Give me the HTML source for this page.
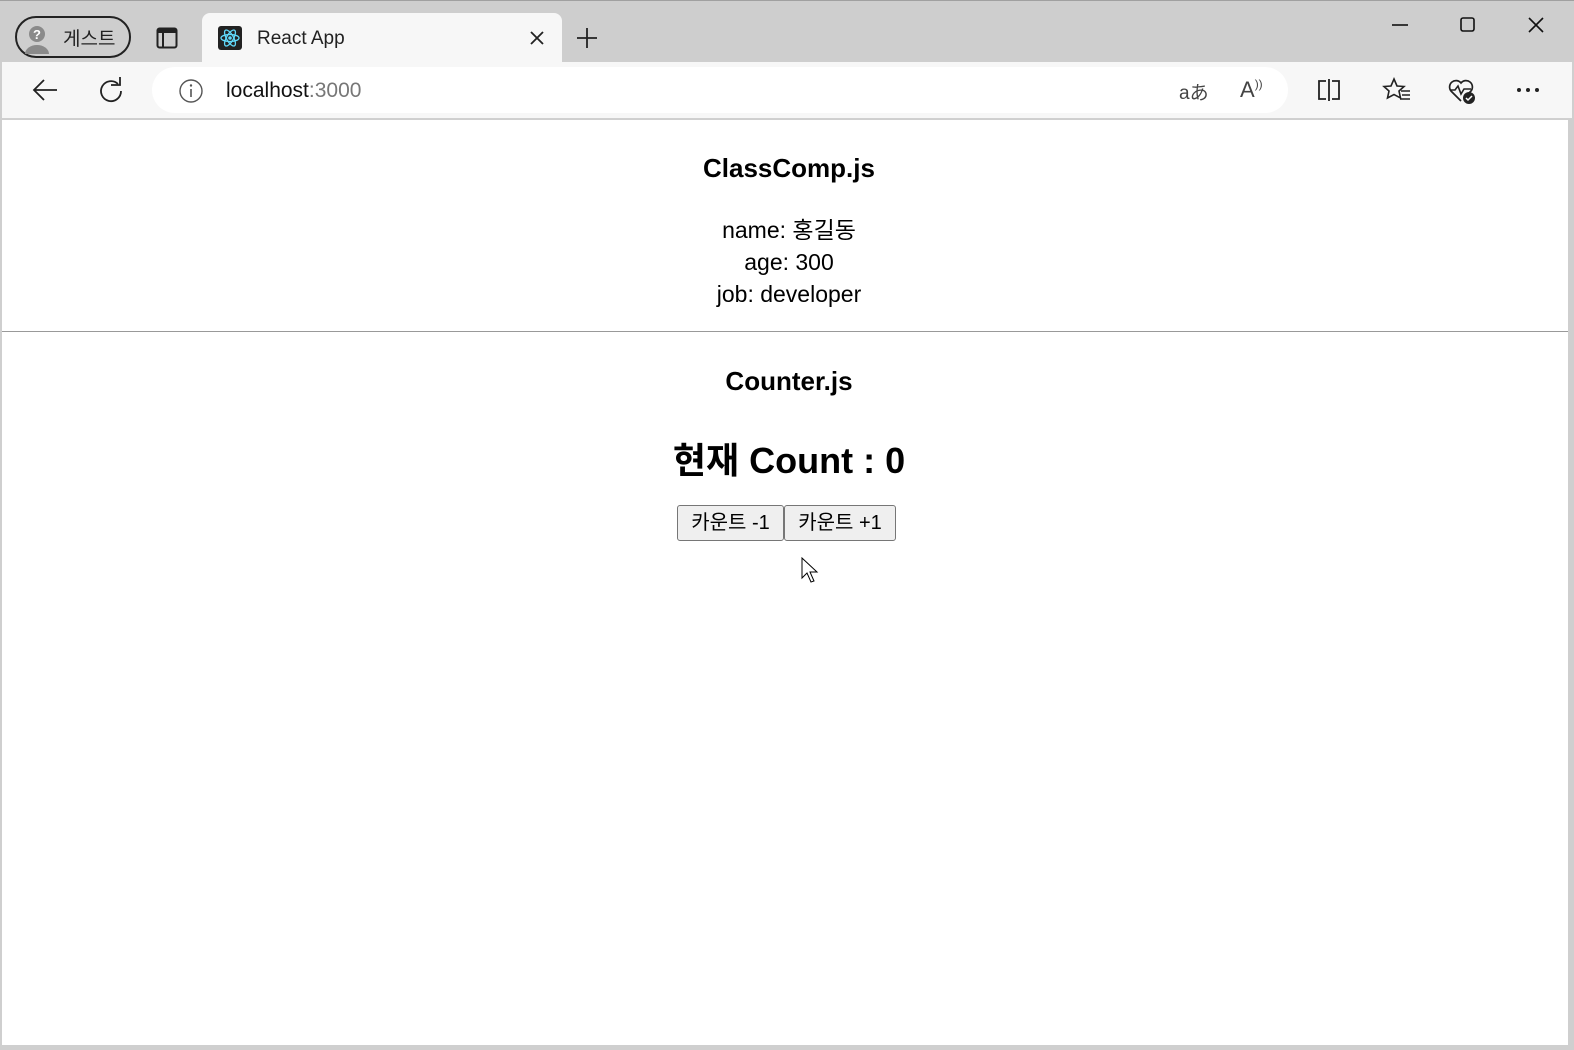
<!DOCTYPE html>
<html><head><meta charset="utf-8"><style>
*{margin:0;padding:0;box-sizing:border-box}
body{width:1574px;height:1050px;background:#cfcfcf;font-family:"Liberation Sans","Noto Sans CJK KR",sans-serif;position:relative;overflow:hidden}
.abs{position:absolute}
.tabbar{left:0;top:0;width:1574px;height:62px;background:#cecece;border-top:1px solid #a0a0a0}
.guest{left:15px;top:16px;width:116px;height:42px;border:2px solid #222;border-radius:21px}
.tab{left:202px;top:13px;width:360px;height:50px;background:#f7f7f7;border-radius:8px 8px 0 0}
.toolbar{left:2px;top:62px;width:1570px;height:57px;background:#f7f7f7;border-bottom:1px solid #d0d0d0}
.url{left:152px;top:67px;width:1136px;height:46px;background:#fff;border-radius:23px}
.content{left:2px;top:120px;width:1566px;height:925px;background:#fff;text-align:center;color:#000}
.c{position:absolute;left:4px;width:100%;text-align:center}
.btn{position:absolute;top:505px;height:36px;background:#efefef;border:1px solid #767676;border-radius:3px;font-size:20px;line-height:34px;text-align:center}
</style></head><body>
<div class="abs tabbar"></div>
<div class="abs guest"></div>
<svg class="abs" style="left:20px;top:22px" width="34" height="32"><circle cx="17" cy="12" r="8" fill="#8a8a8a"/><text x="17" y="17" font-size="13" font-weight="bold" fill="#fff" text-anchor="middle" font-family="Liberation Sans">?</text><path d="M5 32 a12 9 0 0 1 24 0z" fill="#8a8a8a"/></svg>
<div class="abs" style="left:63px;top:24px;font-size:19px;color:#222">게스트</div>
<svg class="abs" style="left:156px;top:27px" width="22" height="22"><rect x="1.5" y="1.5" width="19" height="19" rx="2" fill="none" stroke="#222" stroke-width="2"/><rect x="2" y="2" width="18" height="4" fill="#222"/><line x1="7" y1="5" x2="7" y2="20" stroke="#222" stroke-width="2"/></svg>
<div class="abs tab"></div>
<svg class="abs" style="left:218px;top:26px" width="24" height="24"><rect width="24" height="24" rx="3" fill="#222"/><g fill="none" stroke="#61dafb" stroke-width="1.3"><ellipse cx="12" cy="12" rx="9" ry="3.5"/><ellipse cx="12" cy="12" rx="9" ry="3.5" transform="rotate(60 12 12)"/><ellipse cx="12" cy="12" rx="9" ry="3.5" transform="rotate(120 12 12)"/></g><circle cx="12" cy="12" r="1.8" fill="#61dafb"/></svg>
<div class="abs" style="left:257px;top:28px;font-size:19px;color:#222">React App</div>
<svg class="abs" style="left:529px;top:30px" width="16" height="16"><path d="M2 2L14 14M14 2L2 14" stroke="#222" stroke-width="1.8"/></svg>
<svg class="abs" style="left:575px;top:26px" width="24" height="24"><path d="M12 2V22M2 12H22" stroke="#222" stroke-width="1.8"/></svg>
<svg class="abs" style="left:1390px;top:16px" width="160" height="20"><path d="M2 9H18" stroke="#111" stroke-width="1.6"/><rect x="71" y="2" width="13" height="13" rx="2" fill="none" stroke="#111" stroke-width="1.6"/><path d="M139 2L153 16M153 2L139 16" stroke="#111" stroke-width="1.6"/></svg>
<div class="abs toolbar"></div>
<div class="abs url"></div>
<svg class="abs" style="left:30px;top:77px" width="30" height="26"><path d="M27 13H4M14 3L4 13L14 23" fill="none" stroke="#222" stroke-width="1.8"/></svg>
<svg class="abs" style="left:97px;top:76px" width="28" height="28"><path d="M21 8A10 10 0 1 0 24 15" fill="none" stroke="#222" stroke-width="1.8"/><path d="M14 6H23V-2" fill="none" stroke="#222" stroke-width="1.8" transform="translate(0,3)"/></svg>
<svg class="abs" style="left:178px;top:78px" width="26" height="26"><circle cx="13" cy="13" r="11" fill="none" stroke="#555" stroke-width="1.4"/><path d="M13 11V19" stroke="#555" stroke-width="1.6"/><circle cx="13" cy="7.5" r="1.2" fill="#555"/></svg>
<div class="abs" style="left:226px;top:79px;font-size:21px;color:#111">localhost<span style="color:#777">:3000</span></div>
<div class="abs" style="left:1179px;top:78px;font-size:19px;color:#444">aあ</div>
<div class="abs" style="left:1240px;top:77px;font-size:22px;color:#444">A<span style="font-size:12px;vertical-align:top">))</span></div>
<svg class="abs" style="left:1316px;top:78px" width="26" height="24"><path d="M10 3H3V21H10M16 3H23V21H16M13 1V23" fill="none" stroke="#222" stroke-width="1.8"/></svg>
<svg class="abs" style="left:1382px;top:76px" width="30" height="28"><path d="M12 3L15 10L22 10.5L17 15L18.5 22L12 18.5L5.5 22L7 15L2 10.5L9 10Z" fill="none" stroke="#222" stroke-width="1.6"/><path d="M19 15H28M20 19H28M18 23H28" stroke="#222" stroke-width="1.6"/></svg>
<svg class="abs" style="left:1447px;top:77px" width="30" height="28"><path d="M14 24L4 14A6 6 0 0 1 14 6A6 6 0 0 1 24 14L22 16" fill="none" stroke="#222" stroke-width="1.7"/><path d="M3 13H8L11 9L14 17L17 12H24" fill="none" stroke="#222" stroke-width="1.6"/><circle cx="22" cy="21" r="6" fill="#222"/><path d="M19 21L21 23L25 19" fill="none" stroke="#fff" stroke-width="1.5"/></svg>
<svg class="abs" style="left:1515px;top:86px" width="26" height="8"><circle cx="4" cy="4" r="2" fill="#222"/><circle cx="13" cy="4" r="2" fill="#222"/><circle cx="22" cy="4" r="2" fill="#222"/></svg>
<div class="abs content">
<div class="c" style="top:33px;font-size:26px;font-weight:bold">ClassComp.js</div>
<div class="c" style="top:94px;font-size:23px;line-height:32px">name: 홍길동<br>age: 300<br>job: developer</div>
<div class="abs" style="left:0;top:211px;width:100%;height:1px;background:#999"></div>
<div class="c" style="top:246px;font-size:26px;font-weight:bold">Counter.js</div>
<div class="c" style="top:312px;font-size:36px;font-weight:bold">현재 Count : 0</div>
</div>
<div class="btn" style="left:677px;width:107px">카운트 -1</div>
<div class="btn" style="left:784px;width:112px">카운트 +1</div>
<svg class="abs" style="left:801px;top:557px" width="22" height="28"><path d="M1 1L1 21L6 16L10 25L13 24L9 15L16 15Z" fill="#fff" stroke="#000" stroke-width="1"/></svg>
</body></html>
